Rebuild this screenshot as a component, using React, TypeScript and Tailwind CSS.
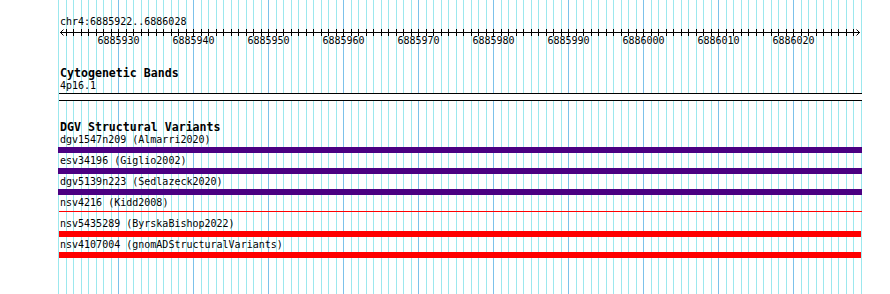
const START = 6885922
const END = 6886029
const PX_PER_BP = 7.5
const X0 = 58.25

const xAt = (pos: number) => Math.round(X0 + (pos - START) * PX_PER_BP)

const positions = Array.from({ length: END - START + 1 }, (_, i) => START + i)

type Variant = { name: string; source: string; kind: "gain" | "thin" | "loss" }

const variants: Variant[] = [
    { name: "dgv1547n209", source: "Almarri2020", kind: "gain" },
    { name: "esv34196", source: "Giglio2002", kind: "gain" },
    { name: "dgv5139n223", source: "Sedlazeck2020", kind: "gain" },
    { name: "nsv4216", source: "Kidd2008", kind: "thin" },
    { name: "nsv5435289", source: "ByrskaBishop2022", kind: "loss" },
    { name: "nsv4107004", source: "gnomADStructuralVariants", kind: "loss" },
]

function GridLines() {
    return (
        <svg className="absolute inset-0" width={890} height={294} shapeRendering="crispEdges">
            {positions.map((p) => (
                <rect
                    key={p}
                    x={xAt(p)}
                    y={0}
                    width={1}
                    height={294}
                    fill={p % 10 === 0 ? "#7cc2ea" : "#9ce8ee"}
                />
            ))}
        </svg>
    )
}

function Ruler() {
    const left = 60
    const right = 860
    return (
        <svg className="block" width={890} height={18}>
            <g shapeRendering="crispEdges">
                <rect x={left} y={4} width={right - left} height={1} fill="#000" />
                {positions.slice(1, -1).map((p) => (
                    <rect key={p} x={xAt(p)} y={1} width={1} height={7} fill="#000" />
                ))}
            </g>
            <path d={`M${left + 3.5} 1.5 L${left + 0.5} 4.5 L${left + 3.5} 7.5`} stroke="#000" fill="none" />
            <path d={`M${right - 3.5} 1.5 L${right - 0.5} 4.5 L${right - 3.5} 7.5`} stroke="#000" fill="none" />
            {positions
                .filter((p) => p % 10 === 0)
                .map((p) => (
                    <text
                        key={p}
                        x={xAt(p) + 0.5}
                        y={15.5}
                        textAnchor="middle"
                        fontSize={10}
                        fontFamily="'DejaVu Sans Mono', monospace"
                        fill="#000"
                    >
                        {p}
                    </text>
                ))}
        </svg>
    )
}

function VariantRow({ v }: { v: Variant }) {
    return (
        <div className="h-[21px]">
            <div className="h-[12px] pl-[60px] whitespace-pre">
                {v.name} ({v.source})
            </div>
            <div className="h-[6px] mt-[1px]">
                {v.kind === "gain" && <div className="ml-[58px] w-[804px] h-[6px] bg-[#4b0082]" />}
                {v.kind === "thin" && <div className="ml-[59px] w-[803px] h-[1px] mt-[2px] bg-[#ff0000]" />}
                {v.kind === "loss" && <div className="ml-[59px] w-[802px] h-[6px] bg-[#ff0000]" />}
            </div>
        </div>
    )
}

export default function App() {
    return (
        <div className="relative w-[890px] h-[294px] bg-white overflow-hidden text-black text-[10px] leading-[12px] font-['DejaVu_Sans_Mono',monospace]">
            <GridLines />

            <div className="relative flex flex-col pt-[16px]">
                <div className="h-[12px] pl-[60px]">chr4:6885922..6886028</div>
                <Ruler />

                <div className="mt-[21px]">
                    <div className="h-[13px] leading-[13px] pl-[60px] font-bold text-[11.6px]">Cytogenetic Bands</div>
                    <div className="h-[12px] pl-[60px]">4p16.1</div>
                    <div className="mt-[1px] ml-[59px] w-[803px] h-[8px] border-y border-black bg-white" />
                </div>

                <div className="mt-[20px]">
                    <div className="h-[13px] leading-[13px] pl-[60px] font-bold text-[11.6px]">DGV Structural Variants</div>
                    {variants.map((v) => (
                        <VariantRow key={v.name} v={v} />
                    ))}
                </div>
            </div>
        </div>
    )
}
